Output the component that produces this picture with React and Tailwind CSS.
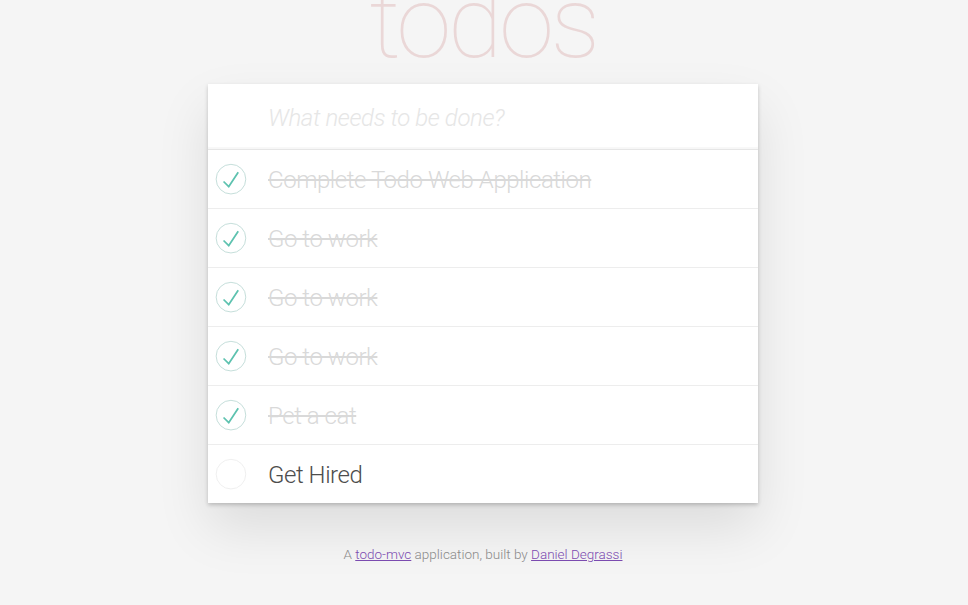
import React, { useState } from 'react';

const initialTodos = [
  { id: 1, title: 'Complete Todo Web Application', completed: true },
  { id: 2, title: 'Go to work', completed: true },
  { id: 3, title: 'Go to work', completed: true },
  { id: 4, title: 'Go to work', completed: true },
  { id: 5, title: 'Pet a cat', completed: true },
  { id: 6, title: 'Get Hired', completed: false },
];

function Toggle({ checked, onClick }) {
  return (
    <button onClick={onClick} className="absolute left-0 top-1/2 -translate-y-1/2 w-10 h-10">
      <svg width="40" height="40" viewBox="-10 -18 100 135">
        <circle
          cx="50"
          cy="50"
          r="50"
          fill="none"
          stroke={checked ? '#bddad5' : '#ededed'}
          strokeWidth="3"
        />
        {checked && <path fill="#5dc2af" d="M72 25L42 71 27 56l-4 4 20 20 34-52z" />}
      </svg>
    </button>
  );
}

export default function App() {
  const [todos, setTodos] = useState(initialTodos);
  const [text, setText] = useState('');

  const toggle = (id) =>
    setTodos(todos.map((t) => (t.id === id ? { ...t, completed: !t.completed } : t)));

  return (
    <div className="min-h-screen bg-[#f5f5f5] overflow-hidden pr-[2px] font-['Roboto','Helvetica_Neue',Arial,sans-serif] font-light text-[#4d4d4d]">
      <div className="w-[550px] mx-auto">
        <h1 className="text-[100px] leading-none font-thin text-center text-[rgba(175,47,47,0.15)] -mt-[27px] tracking-[-3.5px]">
          todos
        </h1>

        <section className="mt-[11px] bg-white shadow-[0_2px_4px_rgba(0,0,0,0.2),0_25px_50px_rgba(0,0,0,0.1)]">
          <input
            value={text}
            onChange={(e) => setText(e.target.value)}
            placeholder="What needs to be done?"
            className="block w-full h-[66px] pt-[2px] pl-[60px] pr-4 text-[24px] font-light tracking-[-0.4px] bg-transparent outline-none border-b border-[#e6e6e6] shadow-[inset_0_-2px_1px_rgba(0,0,0,0.03)] placeholder:italic placeholder:text-[#e6e6e6]"
          />
          <ul>
            {todos.map((todo) => (
              <li
                key={todo.id}
                className="relative h-[59px] pt-[3px] border-b border-[#ededed] last:border-b-0 last:h-[58px] flex items-center"
              >
                <Toggle checked={todo.completed} onClick={() => toggle(todo.id)} />
                <label
                  className={`pl-[60px] pr-4 text-[24px] leading-[1.2] tracking-[-0.45px] ${
                    todo.completed ? 'text-[#d9d9d9] line-through' : 'text-[#4d4d4d]'
                  }`}
                >
                  {todo.title}
                </label>
              </li>
            ))}
          </ul>
        </section>

        <footer className="mt-[41px] text-center text-[13.5px] text-[#8a8a8a]">
          A{' '}
          <a href="#" className="underline text-[#7b4bb0]">
            todo-mvc
          </a>{' '}
          application, built by{' '}
          <a href="#" className="underline text-[#7b4bb0]">
            Daniel Degrassi
          </a>
        </footer>
      </div>
    </div>
  );
}
